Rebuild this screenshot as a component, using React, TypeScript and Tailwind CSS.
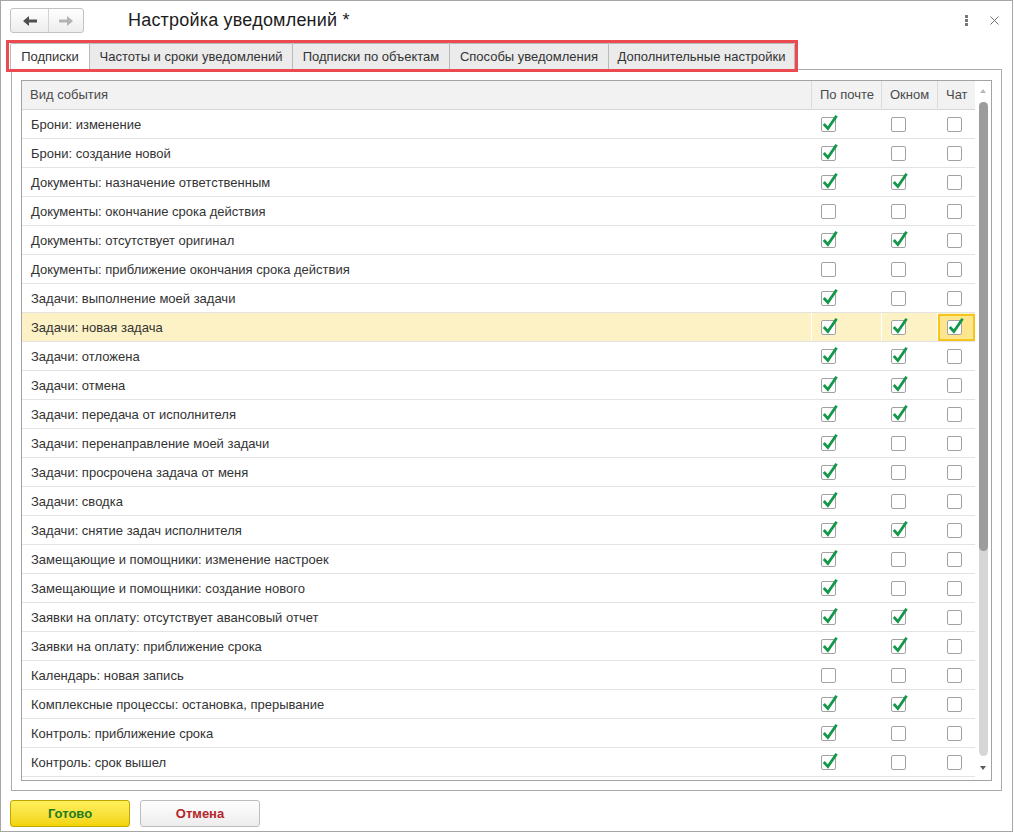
import React from "react";

const rows: [string, boolean, boolean, boolean][] = [
  ["Брони: изменение", true, false, false],
  ["Брони: создание новой", true, false, false],
  ["Документы: назначение ответственным", true, true, false],
  ["Документы: окончание срока действия", false, false, false],
  ["Документы: отсутствует оригинал", true, true, false],
  ["Документы: приближение окончания срока действия", false, false, false],
  ["Задачи: выполнение моей задачи", true, false, false],
  ["Задачи: новая задача", true, true, true],
  ["Задачи: отложена", true, true, false],
  ["Задачи: отмена", true, true, false],
  ["Задачи: передача от исполнителя", true, true, false],
  ["Задачи: перенаправление моей задачи", true, false, false],
  ["Задачи: просрочена задача от меня", true, false, false],
  ["Задачи: сводка", true, false, false],
  ["Задачи: снятие задач исполнителя", true, true, false],
  ["Замещающие и помощники: изменение настроек", true, false, false],
  ["Замещающие и помощники: создание нового", true, false, false],
  ["Заявки на оплату: отсутствует авансовый отчет", true, true, false],
  ["Заявки на оплату: приближение срока", true, true, false],
  ["Календарь: новая запись", false, false, false],
  ["Комплексные процессы: остановка, прерывание", true, true, false],
  ["Контроль: приближение срока", true, false, false],
  ["Контроль: срок вышел", true, false, false],
];

const tabs = [
  { label: "Подписки", w: "w-[80px]" },
  { label: "Частоты и сроки уведомлений", w: "w-[204px]" },
  { label: "Подписки по объектам", w: "w-[158px]" },
  { label: "Способы уведомления", w: "w-[160px]" },
  { label: "Дополнительные настройки", w: "w-[187px]" },
];

function Box({ checked }: { checked: boolean }) {
  return (
    <span className="relative block w-[15px] h-[15px] border border-[#a2a2a2] rounded-[2px] bg-white">
      {checked && (
        <svg
          className="absolute left-[-1px] top-[-4px]"
          width="18"
          height="18"
          viewBox="0 0 18 18"
        >
          <path
            d="M2.8 10 L6.9 14.6 L15.6 1.8"
            fill="none"
            stroke="#13984a"
            strokeWidth="2.8"
            strokeLinejoin="miter"
          />
        </svg>
      )}
    </span>
  );
}

function ArrowLeft({ color }: { color: string }) {
  return (
    <svg width="14" height="10" viewBox="0 0 14 10">
      <path d="M0 5 L6 0 L6 3.5 L14 3.5 L14 6.5 L6 6.5 L6 10 Z" fill={color} />
    </svg>
  );
}

function ArrowRight({ color }: { color: string }) {
  return (
    <svg width="14" height="10" viewBox="0 0 14 10">
      <path d="M14 5 L8 0 L8 3.5 L0 3.5 L0 6.5 L8 6.5 L8 10 Z" fill={color} />
    </svg>
  );
}

export default function App() {
  return (
    <div
      className="relative w-[1013px] h-[832px] border border-[#a6a6a6] bg-white text-[13px] text-[#333]"
      style={{ fontFamily: '"Liberation Sans", Arial, sans-serif' }}
    >
      {/* top bar */}
      <div className="flex h-[42px] pt-[7px]">
        <div className="ml-[9px] flex h-[25px] w-[74px] rounded-[3px] border border-[#c2c2c2] bg-linear-to-b from-white to-[#ededed]">
          <div className="flex w-[38px] items-center justify-center border-r border-[#d2d2d2]">
            <ArrowLeft color="#4f4f4f" />
          </div>
          <div className="flex flex-1 items-center justify-center">
            <ArrowRight color="#b3b3b3" />
          </div>
        </div>
        <div className="ml-[44px] text-[18px] leading-[25px] tracking-[0.2px] text-[#1c1c1c]">
          Настройка уведомлений *
        </div>
        <div className="ml-auto mr-[13px] flex h-[25px] items-center gap-[22px]">
          <div className="flex flex-col gap-[1px]">
            <span className="block h-[3px] w-[3px] bg-[#777]" />
            <span className="block h-[3px] w-[3px] bg-[#777]" />
            <span className="block h-[3px] w-[3px] bg-[#777]" />
          </div>
          <svg width="9" height="9" viewBox="0 0 9 9">
            <path d="M0.5 0.5 L8.5 8.5 M8.5 0.5 L0.5 8.5" stroke="#707070" strokeWidth="1" />
          </svg>
        </div>
      </div>

      {/* tabs */}
      <div className="ml-[9px] flex h-[26px] items-start">
        {tabs.map((t, i) => (
          <div
            key={t.label}
            className={`${t.w} ${i > 0 ? "-ml-px" : ""} ${
              i === 0
                ? "relative z-10 h-[27px] bg-white"
                : "h-[26px] bg-[#ebebeb]"
            } flex items-center justify-center rounded-t-[2px] border-x border-t border-[#b9b9b9] pb-[1px] leading-none text-[#333]`}
          >
            {t.label}
          </div>
        ))}
      </div>

      {/* panel */}
      <div className="mx-[10px] h-[722px] border border-[#ababab] pl-[9px] pr-[9px] pt-[10px]">
        <div className="flex h-[701px] border border-[#a3a3a3]">
          <div className="w-[953px]">
            {/* header */}
            <div className="flex h-[29px] border-b border-[#d6d6d6] bg-[#f2f2f2] pb-[1px] text-[#4a4a4a]">
              <div className="flex w-[789px] items-center pl-[8px]">Вид события</div>
              <div className="flex w-[70px] items-center border-l border-[#dcdcdc] pl-[8px]">По почте</div>
              <div className="flex w-[56px] items-center border-l border-[#dcdcdc] pl-[8px]">Окном</div>
              <div className="flex w-[38px] items-center border-l border-[#dcdcdc] pl-[8px]">Чат</div>
            </div>
            {rows.map(([label, a, b, c], idx) => {
              const hl = idx === 7;
              const sep = hl ? "border-white" : "border-transparent";
              return (
                <div
                  key={label}
                  className={`flex h-[29px] border-b border-[#e3e3e3] ${hl ? "bg-[#fdf2c6]" : ""}`}
                >
                  <div className="flex w-[789px] items-center pl-[9px] pt-[2px]">{label}</div>
                  <div className={`flex w-[70px] items-center border-l pl-[9px] ${sep}`}>
                    <Box checked={a} />
                  </div>
                  <div className={`flex w-[56px] items-center border-l pl-[9px] ${sep}`}>
                    <Box checked={b} />
                  </div>
                  <div className={`flex w-[38px] items-start border-l ${sep}`}>
                    {hl ? (
                      <div className="mt-px flex h-[27px] w-[37px] items-center border-2 border-[#f6c51d] bg-[#fde68d] pl-[7px]">
                        <Box checked={c} />
                      </div>
                    ) : (
                      <div className="flex h-[28px] items-center pl-[9px]">
                        <Box checked={c} />
                      </div>
                    )}
                  </div>
                </div>
              );
            })}
          </div>
          {/* scrollbar */}
          <div className="flex w-[16px] flex-col items-center">
            <svg className="mt-[8px]" width="6" height="4" viewBox="0 0 6 4">
              <path d="M0 4 L3 0 L6 4 Z" fill="#b8b8b8" />
            </svg>
            <div className="mt-[9px] h-[654px] w-[9px] rounded-[5px] bg-[#d6d6d6]">
              <div className="h-[449px] w-[9px] rounded-[5px] bg-[#9c9c9c]" />
            </div>
            <svg className="mt-[10px]" width="6" height="4" viewBox="0 0 6 4">
              <path d="M0 0 L6 0 L3 4 Z" fill="#5c5c5c" />
            </svg>
          </div>
        </div>
      </div>

      {/* buttons */}
      <div className="ml-[9px] mt-[9px] flex gap-[10px]">
        <button className="flex h-[27px] w-[120px] items-center justify-center rounded-[3px] border border-[#c3a500] bg-linear-to-b from-[#fff05a] to-[#f3d400] text-[13px] font-bold text-[#1e7d1e]">
          Готово
        </button>
        <button className="flex h-[27px] w-[120px] items-center justify-center rounded-[3px] border border-[#bdbdbd] bg-linear-to-b from-white to-[#ececec] text-[13px] font-bold text-[#b3262a]">
          Отмена
        </button>
      </div>

      {/* annotation highlight */}
      <div className="pointer-events-none absolute left-[5px] top-[39px] z-20 h-[32px] w-[792px] border-[3px] border-[#ea4a50]" />
    </div>
  );
}
